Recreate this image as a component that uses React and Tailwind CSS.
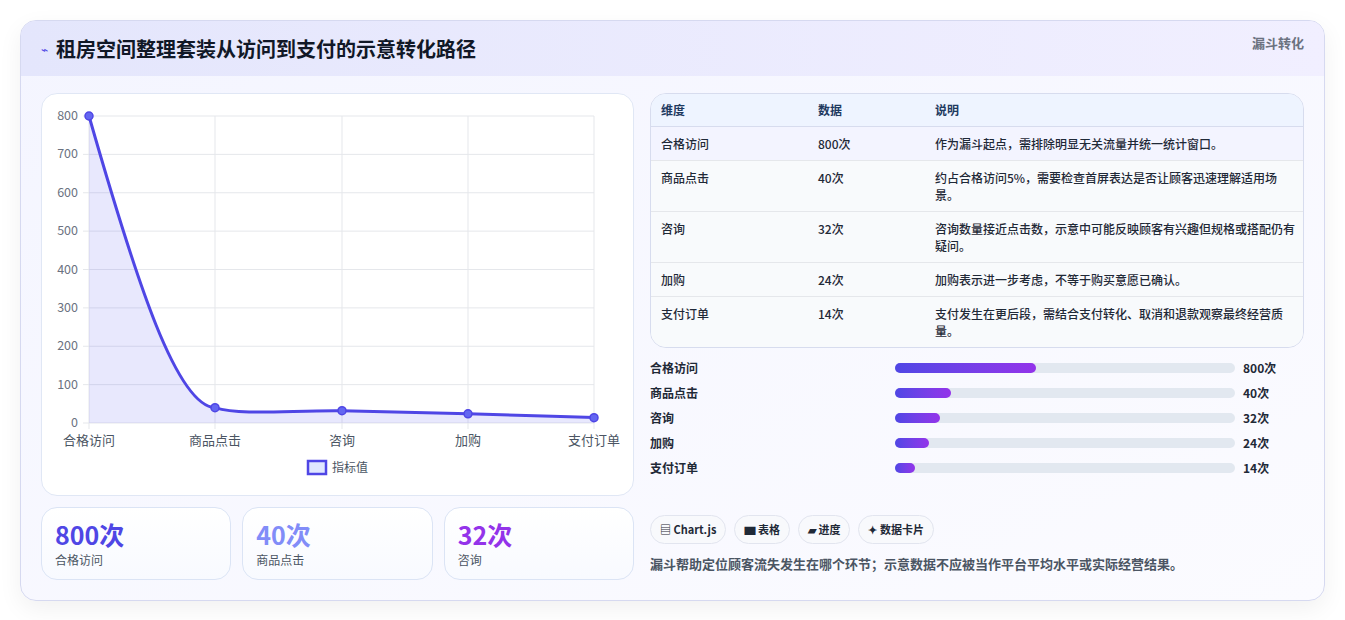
import React from 'react';

const rows = [
  { k: '合格访问', v: '800次', d: '作为漏斗起点，需排除明显无关流量并统一统计窗口。' },
  { k: '商品点击', v: '40次', d: '约占合格访问5%，需要检查首屏表达是否让顾客迅速理解适用场景。' },
  { k: '咨询', v: '32次', d: '咨询数量接近点击数，示意中可能反映顾客有兴趣但规格或搭配仍有疑问。' },
  { k: '加购', v: '24次', d: '加购表示进一步考虑，不等于购买意愿已确认。' },
  { k: '支付订单', v: '14次', d: '支付发生在更后段，需结合支付转化、取消和退款观察最终经营质量。' },
];

const bars = [
  { k: '合格访问', v: '800次', w: 41.5 },
  { k: '商品点击', v: '40次', w: 16.5 },
  { k: '咨询', v: '32次', w: 13.2 },
  { k: '加购', v: '24次', w: 10 },
  { k: '支付订单', v: '14次', w: 6 },
];

const Chart = () => {
  const xs = [47, 173, 300, 426, 552];
  const vals = [800, 40, 32, 24, 14];
  const y = (v) => 329 - v * 0.38375;
  const pts = xs.map((x, i) => [x, y(vals[i])]);
  const d = `M47,22 C95,190 135,312 173,313.6 C200,322 250,316 300,316.7 C350,318 390,319 426,319.8 C470,321 510,322 552,323.6`;
  const area = `${d} L552,329 L47,329 Z`;
  const labels = ['合格访问', '商品点击', '咨询', '加购', '支付订单'];
  return (
    <svg width="593" height="403" className="block" style={{ fontFamily: '"Noto Sans CJK SC", sans-serif' }}>
      {[0, 100, 200, 300, 400, 500, 600, 700, 800].map((v) => (
        <g key={v}>
          <line x1="41" x2="552" y1={y(v)} y2={y(v)} stroke="#e5e7eb" />
          <text x="36" y={y(v) + 4} textAnchor="end" fontSize="12.5" fill="#6b7280">{v}</text>
        </g>
      ))}
      {xs.map((x) => (
        <line key={x} x1={x} x2={x} y1="22" y2="335" stroke="#e5e7eb" />
      ))}
      <path d={area} fill="#6366f1" fillOpacity="0.15" />
      <path d={d} fill="none" stroke="#4f46e5" strokeWidth="3" />
      {pts.map((p, i) => (
        <circle key={i} cx={p[0]} cy={p[1]} r="4" fill="#6366f1" stroke="#4f46e5" strokeWidth="1.5" />
      ))}
      {xs.map((x, i) => (
        <text key={i} x={x} y="351" textAnchor="middle" fontSize="13" fill="#4b5563">{labels[i]}</text>
      ))}
      <rect x="266" y="367" width="18" height="13" fill="#e0e7ff" stroke="#4f46e5" strokeWidth="2.5" />
      <text x="290" y="378" fontSize="12" fill="#4b5563">指标值</text>
    </svg>
  );
};

export default function App() {
  return (
    <div className="min-h-[620px] bg-white pt-5 px-5" style={{ fontFamily: '"Noto Sans CJK SC", "Noto Sans", sans-serif' }}>
      <div className="rounded-2xl border border-[#d6d9f0] bg-gradient-to-br from-[#f4f5ff] to-[#fbfbff] shadow-[0_8px_24px_rgba(0,0,0,0.06)] overflow-hidden">
        <div className="h-[55px] flex items-center justify-between pl-5 pr-5 bg-gradient-to-r from-[#e4e6fc] to-[#f1efff]">
          <div className="flex items-center gap-2">
            <span className="text-[#4f46e5] text-xs">⌁</span>
            <h1 className="text-[20px] font-bold text-[#111827]">租房空间整理套装从访问到支付的示意转化路径</h1>
          </div>
          <span className="text-[13px] font-bold text-[#6b7280] self-start mt-3">漏斗转化</span>
        </div>
        <div className="flex gap-4 px-5 pt-[17px] pb-5">
          <div className="w-[593px] flex flex-col gap-[11px]">
            <div className="rounded-2xl border border-[#e0e7f5] bg-white h-[403px]">
              <Chart />
            </div>
            <div className="grid grid-cols-3 gap-[11px]">
              {[
                ['800次', '合格访问', 'text-[#4f46e5]'],
                ['40次', '商品点击', 'text-[#818cf8]'],
                ['32次', '咨询', 'text-[#9333ea]'],
              ].map(([v, k, c]) => (
                <div key={k} className="h-[73px] rounded-2xl border border-[#dbe4f5] bg-gradient-to-b from-white to-[#f8faff] px-[13px] pt-[10px]">
                  <div className={`text-[25px] font-bold leading-8 ${c}`}>{v}</div>
                  <div className="text-xs text-[#4b5563] mt-0.5">{k}</div>
                </div>
              ))}
            </div>
          </div>
          <div className="flex-1 flex flex-col">
            <div className="rounded-2xl border border-[#d7dcee] overflow-hidden bg-[#f8fafc] text-xs text-[#1f2937]">
              <div className="flex h-[33px] items-center bg-[#eef4ff] font-bold text-[#1e3a5f] border-b border-[#d7dcee]">
                <div className="w-[167px] pl-[10px]">维度</div>
                <div className="w-[117px]">数据</div>
                <div className="flex-1">说明</div>
              </div>
              {rows.map((r, i) => (
                <div key={r.k} className={`flex py-2 border-b border-[#e5e7eb] last:border-b-0 ${i === 0 ? 'bg-[#f3f4ff]' : 'bg-[#f8fafc]'}`}>
                  <div className="w-[167px] pl-[10px] font-medium leading-[17px]">{r.k}</div>
                  <div className="w-[117px] font-medium leading-[17px]">{r.v}</div>
                  <div className="flex-1 pr-[6px] leading-[17px] font-medium">{r.d}</div>
                </div>
              ))}
            </div>
            <div className="mt-[7px] flex flex-col">
              {bars.map((b) => (
                <div key={b.k} className="flex items-center h-[25px] text-xs font-semibold text-[#1f2937]">
                  <div className="w-[245px]">{b.k}</div>
                  <div className="w-[340px] h-[10px] rounded-full bg-[#e2e8f0]">
                    <div className="h-full rounded-full bg-gradient-to-r from-[#4f46e5] to-[#9333ea]" style={{ width: `${b.w}%` }} />
                  </div>
                  <div className="ml-2 font-bold">{b.v}</div>
                </div>
              ))}
            </div>
            <div className="mt-[35px] flex gap-2 text-[11px] font-semibold text-[#1f2937]">
              {['▤ Chart.js', '▆ 表格', '▰ 进度', '✦ 数据卡片'].map((t) => (
                <span key={t} className="h-[29px] flex items-center px-[9px] rounded-full border border-[#e2e5ef] bg-[#f8f9fc]">{t}</span>
              ))}
            </div>
            <p className="mt-[10px] text-[13px] font-semibold text-[#4b5563]">漏斗帮助定位顾客流失发生在哪个环节；示意数据不应被当作平台平均水平或实际经营结果。</p>
          </div>
        </div>
      </div>
    </div>
  );
}
